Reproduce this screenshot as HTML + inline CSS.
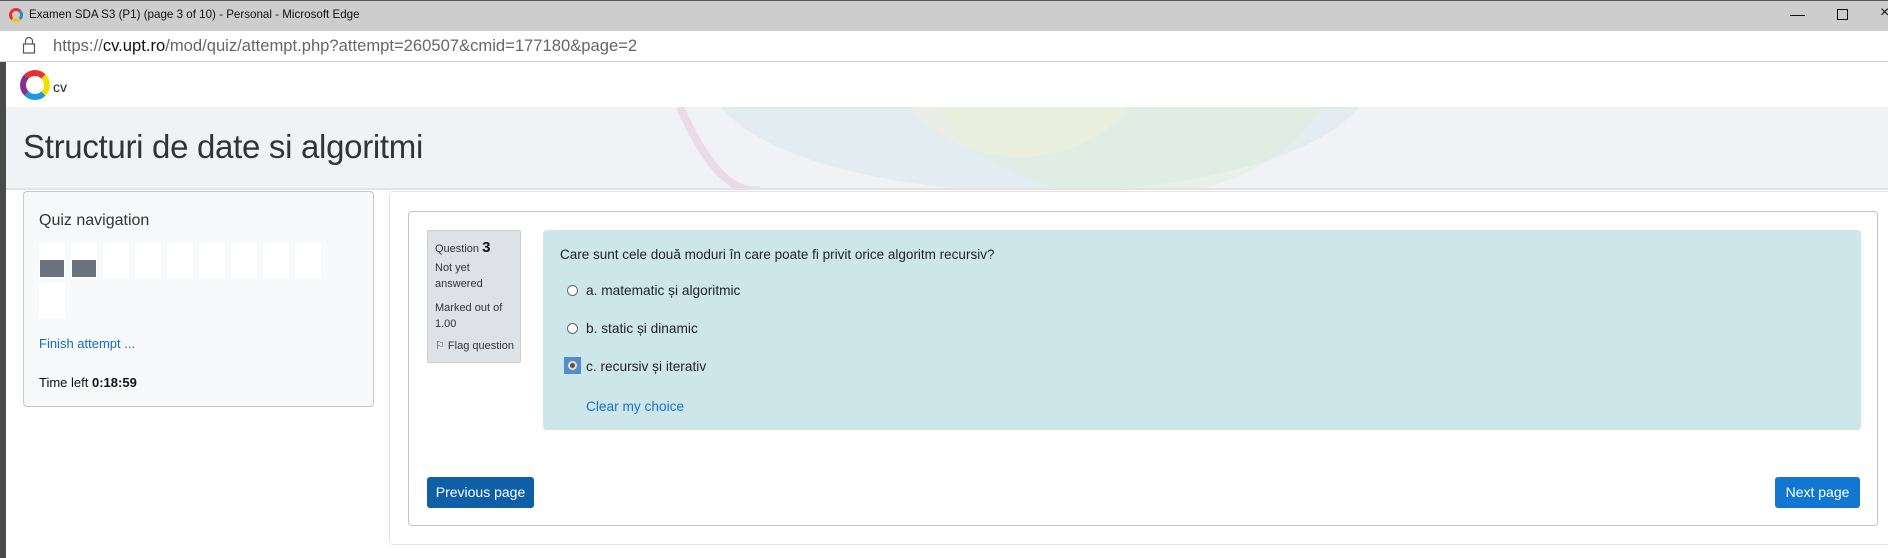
<!DOCTYPE html>
<html><head><meta charset="utf-8"><style>
*{box-sizing:border-box;margin:0;padding:0}
body{width:1888px;height:558px;overflow:hidden;background:#fff;font-family:"Liberation Sans",sans-serif;position:relative;color:#1d2125}
.abs{position:absolute}
</style></head><body>
<!-- title bar -->
<div class="abs" style="left:0;top:0;width:1888px;height:31px;background:#cdcdcd;border-top:1px solid #555"></div>
<div class="abs" style="left:9px;top:8px;width:14px;height:14px;border-radius:50%;border:3px solid #e8312f;border-right-color:#1b8fd0;border-bottom-color:#f3c400"></div>
<div class="abs" style="left:29px;top:8px;font-size:11.6px;color:#111">Examen SDA S3 (P1) (page 3 of 10) - Personal - Microsoft Edge</div>
<div class="abs" style="left:1790px;top:15px;width:15px;height:1px;background:#111"></div>
<div class="abs" style="left:1837px;top:9px;width:11px;height:11px;border:1px solid #111"></div>
<div class="abs" style="left:1880px;top:4px;font-size:16px;color:#111">×</div>
<!-- address bar -->
<div class="abs" style="left:0;top:31px;width:1888px;height:31px;background:#fff;border-bottom:1px solid #d0d0d0"></div>
<svg class="abs" style="left:22px;top:36px" width="14" height="18" viewBox="0 0 14 18"><path d="M3.5 8V5a3.5 3.5 0 0 1 7 0v3" fill="none" stroke="#555" stroke-width="1.2"/><rect x="1.5" y="8" width="11" height="9" fill="none" stroke="#555" stroke-width="1.2"/></svg>
<div class="abs" style="left:53px;top:36px;font-size:16.6px;color:#666">https://<span style="color:#111">cv.upt.ro</span>/mod/quiz/attempt.php?attempt=260507&amp;cmid=177180&amp;page=2</div>
<!-- nav -->
<div class="abs" style="left:0;top:62px;width:1888px;height:45px;background:#fff;box-shadow:0 2px 3px rgba(0,0,0,.06)"></div>
<div class="abs" style="left:20px;top:70px;width:30px;height:30px;border-radius:50%;border:6px solid #e8312f;border-right-color:#f3e000;border-bottom-color:#1b9ad6;border-left-color:#8b2c8f"></div>
<div class="abs" style="left:53px;top:79px;font-size:14px;color:#222">cv</div>
<!-- header -->
<div class="abs" style="left:0;top:107px;width:1888px;height:83px;background:#f1f2f5;overflow:hidden;border-bottom:2px solid #e2e3e6">
<svg width="1888" height="83" style="position:absolute;left:0;top:0">
<ellipse cx="1040" cy="-30" rx="330" ry="115" fill="#cfe4ec" opacity=".4"/>
<ellipse cx="1130" cy="-40" rx="200" ry="130" fill="#dcefd6" opacity=".45"/>
<ellipse cx="1020" cy="-60" rx="130" ry="110" fill="#f2f2d8" opacity=".45"/>
<path d="M680 0 Q720 90 760 83" stroke="#eadce6" stroke-width="8" fill="none"/>
</svg>
<div class="abs" style="left:23px;top:21px;font-size:33px;color:#333;letter-spacing:-0.3px">Structuri de date si algoritmi</div>
</div>
<!-- left strip -->
<div class="abs" style="left:0;top:62px;width:6px;height:496px;background:#4a4a4a"></div>
<!-- quiz nav -->
<div class="abs" style="left:23px;top:191px;width:351px;height:216px;background:#f8f9fa;border:1px solid #c8c8c8;border-radius:4px">
<div class="abs" style="left:15px;top:20px;font-size:16px;color:#333">Quiz navigation</div>
<div class="abs" style="left:15px;top:51px;width:290px">
<div style="display:flex;flex-wrap:wrap;gap:4px 6px">
<div style="width:26px;height:36px;background:#fff;position:relative"><div style="position:absolute;left:1px;right:1px;bottom:2px;height:17px;background:#6a737d"></div></div>
<div style="width:26px;height:36px;background:#fff;position:relative"><div style="position:absolute;left:1px;right:1px;bottom:2px;height:17px;background:#6a737d"></div></div>
<div style="width:26px;height:36px;background:#fff"></div><div style="width:26px;height:36px;background:#fff"></div><div style="width:26px;height:36px;background:#fff"></div><div style="width:26px;height:36px;background:#fff"></div><div style="width:26px;height:36px;background:#fff"></div><div style="width:26px;height:36px;background:#fff"></div><div style="width:26px;height:36px;background:#fff"></div><div style="width:26px;height:36px;background:#fff"></div>
</div></div>
<div class="abs" style="left:15px;top:144px;font-size:13px;color:#0f6cbf">Finish attempt ...</div>
<div class="abs" style="left:15px;top:183px;font-size:13px;color:#111">Time left <b>0:18:59</b></div>
</div>
<!-- main -->
<div class="abs" style="left:389px;top:191px;width:1510px;height:354px;border:1px solid #e1e3e6;border-radius:4px;background:#fff"></div>
<div class="abs" style="left:408px;top:211px;width:1470px;height:315px;border:1px solid #c4c4c4;border-radius:4px;background:#fff"></div>
<div class="abs" style="left:427px;top:230px;width:94px;height:133px;background:#dee2e6;border:1px solid #c9ced3;border-radius:2px;font-size:11px;color:#333;padding:9px 0 0 7px;line-height:16px">
<div>Question <b style="font-size:15px;color:#111">3</b></div>
<div style="margin-top:3px">Not yet<br>answered</div>
<div style="margin-top:8px">Marked out of<br>1.00</div>
<div style="margin-top:6px">⚐ Flag question</div>
</div>
<div class="abs" style="left:543px;top:230px;width:1318px;height:200px;background:#cde6ea;border-radius:4px;font-size:13.7px;color:#1d2125">
<div class="abs" style="left:17px;top:17px;font-size:13.5px">Care sunt cele două moduri în care poate fi privit orice algoritm recursiv?</div>
<div class="abs" style="left:24px;top:55px;width:11px;height:11px;border:1px solid #666;border-radius:50%;background:#fff"></div>
<div class="abs" style="left:43px;top:53px">a. matematic și algoritmic</div>
<div class="abs" style="left:24px;top:93px;width:11px;height:11px;border:1px solid #666;border-radius:50%;background:#fff"></div>
<div class="abs" style="left:43px;top:91px">b. static și dinamic</div>
<div class="abs" style="left:21px;top:127px;width:17px;height:17px;background:#4a90d9"></div>
<div class="abs" style="left:24px;top:130px;width:11px;height:11px;border:1px solid #888;border-radius:50%;background:#ddd"><div style="margin:2px;width:5px;height:5px;border-radius:50%;background:#555"></div></div>
<div class="abs" style="left:43px;top:129px">c. recursiv și iterativ</div>
<div class="abs" style="left:43px;top:169px;color:#1a73c9">Clear my choice</div>
</div>
<div class="abs" style="left:427px;top:477px;width:107px;height:31px;background:#0f5ea8;border-radius:3px;color:#fff;font-size:14px;text-align:center;line-height:31px">Previous page</div>
<div class="abs" style="left:1775px;top:477px;width:85px;height:31px;background:#1177d1;border-radius:3px;color:#fff;font-size:14px;text-align:center;line-height:31px">Next page</div>
</body></html>
